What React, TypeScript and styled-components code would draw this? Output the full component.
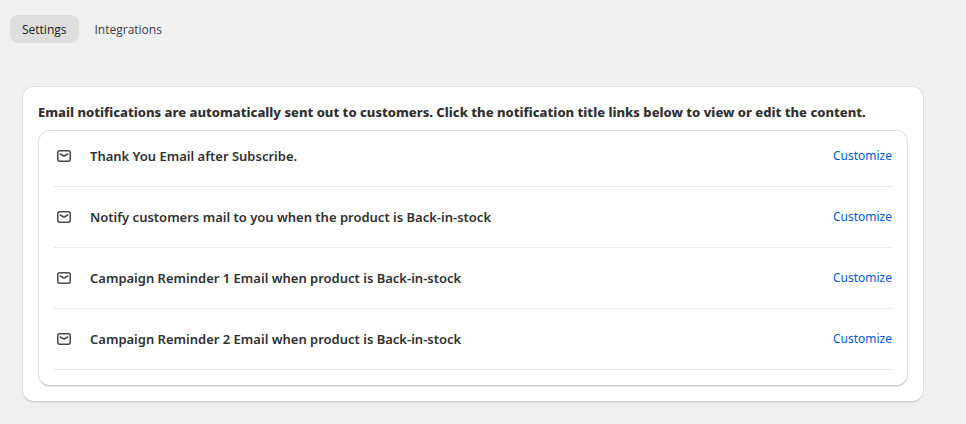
import React from 'react';
import styled, { createGlobalStyle } from 'styled-components';

const GlobalStyle = createGlobalStyle`
  * { box-sizing: border-box; }
  body {
    margin: 0;
    background: #f0f0f0;
    color: #303030;
    font-family: 'Noto Sans', sans-serif;
    font-size: 13px;
    line-height: 20px;
  }
`;

const Page = styled.main`
  padding: 15px 42px 20px 22px;
`;

const Tabs = styled.nav`
  display: flex;
  gap: 4px;
  margin-left: -12px;
`;

const Tab = styled.button<{ $active?: boolean }>`
  height: 28px;
  padding: 2px 12px 0;
  border: 0;
  border-radius: 8px;
  background: ${(p) => (p.$active ? '#dedede' : 'transparent')};
  color: ${(p) => (p.$active ? '#202020' : '#3c3c3c')};
  font-family: 'Open Sans', sans-serif;
  font-size: 12px;
  font-weight: 500;
  line-height: 16px;
  cursor: pointer;
`;

const Card = styled.section`
  padding: 15px;
  border: 1px solid #e0e0e0;
  border-bottom-color: #cccccc;
  border-radius: 12px;
  background: #fff;
  box-shadow: 0 1px 0 #e3e3e3;
`;

const OuterCard = styled(Card)`
  margin-top: 43px;
`;

const Title = styled.h2`
  margin: 0 0 8px;
  font-size: 13px;
  font-weight: 800;
  line-height: 20px;
`;

const List = styled.ul`
  margin: 0;
  padding: 0;
  list-style: none;
`;

const Row = styled.li`
  display: flex;
  align-items: center;
  padding: 20px 0;
  border-bottom: 1px solid #ebebeb;

  &:first-child {
    padding-top: 0;
  }
`;

const MailIcon = styled.svg`
  flex: none;
  width: 20px;
  height: 20px;
  margin-right: 16px;
  fill: none;
  stroke: #4a4a4a;
  stroke-width: 1.5;
  stroke-linecap: round;
  stroke-linejoin: round;
`;

const Label = styled.span`
  flex: 1;
  font-weight: 600;
`;

const Link = styled.a`
  color: #005bd3;
  font-family: 'Noto Sans', sans-serif;
  font-size: 12px;
  text-decoration: none;
`;

const notifications = [
  'Thank You Email after Subscribe.',
  'Notify customers mail to you when the product is Back-in-stock',
  'Campaign Reminder 1 Email when product is Back-in-stock',
  'Campaign Reminder 2 Email when product is Back-in-stock',
];

export default function App() {
  return (
    <>
      <GlobalStyle />
      <Page>
        <Tabs>
          <Tab $active>Settings</Tab>
          <Tab>Integrations</Tab>
        </Tabs>
        <OuterCard>
          <Title>
            Email notifications are automatically sent out to customers. Click the notification title
            links below to view or edit the content.
          </Title>
          <Card>
            <List>
              {notifications.map((name) => (
                <Row key={name}>
                  <MailIcon viewBox="0 0 20 20" aria-hidden="true">
                    <rect x="3.75" y="4.75" width="12.5" height="10.5" rx="2" />
                    <path d="M6.25 8 9.3 9.75a1.4 1.4 0 0 0 1.4 0L13.75 8" />
                  </MailIcon>
                  <Label>{name}</Label>
                  <Link href="#">Customize</Link>
                </Row>
              ))}
            </List>
          </Card>
        </OuterCard>
      </Page>
    </>
  );
}
